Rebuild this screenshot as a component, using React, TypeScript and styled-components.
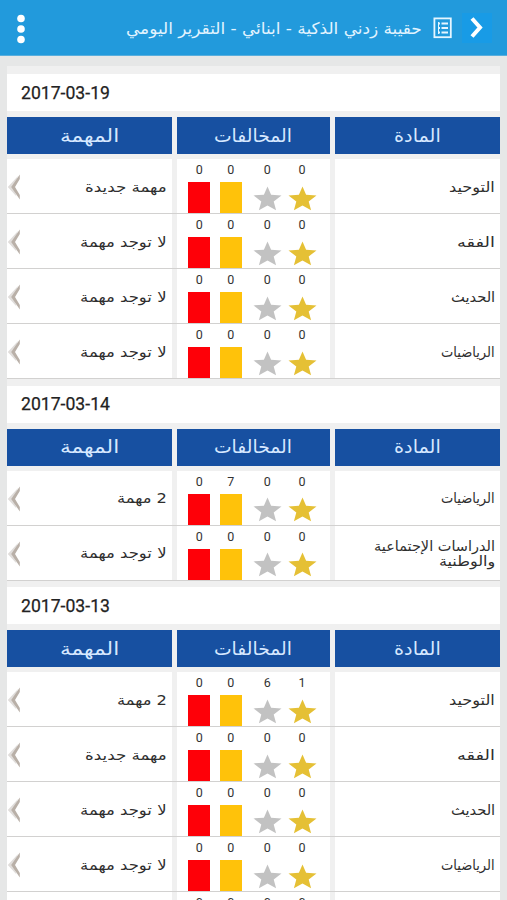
import React, { useLayoutEffect, useRef, useState } from "react";
import styled, { createGlobalStyle } from "styled-components";

const Global = createGlobalStyle`
  * { box-sizing: border-box; }
  html, body { margin: 0; height: 900px; overflow: hidden; }
  body { background: #e6e7e7; font-family: "DejaVu Sans", sans-serif; }
`;

const Screen = styled.div`
  width: 507px;
  height: 900px;
  overflow: hidden;
  display: flex;
  flex-direction: column;
`;

const TopBar = styled.header`
  direction: ltr;
  flex: none;
  height: 56px;
  padding: 0 15px;
  display: flex;
  align-items: center;
  background: #229adc;
  border-bottom: 1px solid #58aedd;
  color: #e2f4ff;
`;

const MenuDots = styled.svg`
  width: 12px;
  height: 32px;
  margin-top: 2px;
  fill: #fff;
`;

const Title = styled.h1`
  margin: 2px 11px 0 auto;
  font-size: 16px;
  line-height: 24px;
  font-weight: 400;
`;

const ListIcon = styled.svg`
  width: 20px;
  height: 22px;
  fill: none;
  stroke: #e6f6ff;
`;

const Back = styled.button`
  width: 30px;
  height: 30px;
  margin: 1px 0 0 9px;
  padding: 0;
  border: 0;
  background: #189be6;
  svg { display: block; fill: none; stroke: #fff; stroke-width: 4; }
`;

const Panel = styled.main`
  direction: rtl;
  flex: none;
  margin: 10px 7px 0;
  padding-top: 8px;
  background: #f0f0f0;
`;

const Day = styled.section`
  display: flex;
  flex-direction: column;
  gap: 6px;
  margin-bottom: 6.5px;
`;

const DateBar = styled.div`
  direction: ltr;
  height: 37px;
  padding-left: 14px;
  display: flex;
  align-items: center;
  background: #fff;
  color: #222;
  font: 400 19px/24px Roboto, sans-serif;
  -webkit-text-stroke: 0.25px #222;
`;

const HeadRow = styled.div`
  display: grid;
  grid-template-columns: 165px 152.5px 164.5px;
  column-gap: 5.5px;
  height: 37px;
`;

const HeadCell = styled.div`
  display: flex;
  align-items: center;
  justify-content: center;
  background: #1750a1;
  color: #d6e8ff;
  font-size: 18px;
  line-height: 26px;
`;

const Rows = styled.div`
  margin-top: -1px;
`;

const Row = styled.div`
  display: grid;
  grid-template-columns: 165px 152.5px 164.5px;
  column-gap: 5.5px;
  height: 55px;
  border-bottom: 1.5px solid #d2d1d0;
`;

const Cell = styled.div`
  background: #fff;
  display: flex;
  align-items: center;
  padding: 2px 5px 0;
  color: #2e2e2e;
  font-size: 14px;
  line-height: 15px;
`;

const Lines = styled.div`
  display: flex;
  flex-direction: column;
`;

const TaskCell = styled(Cell)`
  justify-content: space-between;
  padding-left: 0;
`;

const Marks = styled(Cell)`
  direction: ltr;
  align-items: start;
  padding: 0 8px 0 6.5px;
  display: grid;
  grid-template-columns: 31.5px 31.5px 41.5px 28px;
`;

const Mark = styled.div`
  display: flex;
  flex-direction: column;
  align-items: center;
  font: 400 12.5px/16px Roboto, sans-serif;
  padding-top: 3px;
  color: #333;
`;

const Block = styled.i<{ $color: string }>`
  width: 22px;
  height: 31px;
  margin-top: 4px;
  background: ${(p) => p.$color};
`;

const StarSvg = styled.svg<{ $color: string }>`
  width: 29px;
  height: 25px;
  margin-top: 7.5px;
  fill: ${(p) => p.$color};
`;

const Fit = styled.span<{ $width: number }>`
  display: flex;
  width: ${(p) => p.$width}px;
  white-space: nowrap;
`;

const FitInner = styled.span<{ $ltr?: boolean }>`
  flex: none;
  transform-origin: ${(p) => (p.$ltr ? "left" : "right")} center;
`;

function Label({ text, width, ltr }: { text: string; width: number; ltr?: boolean }) {
  const ref = useRef<HTMLSpanElement>(null);
  const [scale, setScale] = useState(1);
  useLayoutEffect(() => {
    if (ref.current) setScale(width / ref.current.offsetWidth);
  }, [text, width]);
  return (
    <Fit $width={width} dir={ltr ? "ltr" : "rtl"}>
      <FitInner ref={ref} $ltr={ltr} style={{ transform: `scaleX(${scale})` }}>
        {text}
      </FitInner>
    </Fit>
  );
}

type Text = [string, number];
type Entry = { subject: Text[]; marks: number[]; task: Text };

const TAWHEED: Text[] = [["التوحيد", 46]];
const FIQH: Text[] = [["الفقه", 38]];
const HADITH: Text[] = [["الحديث", 44]];
const MATH: Text[] = [["الرياضيات", 54]];
const SOCIAL: Text[] = [["الدراسات الإجتماعية", 121], ["والوطنية", 56]];
const NEW: Text = ["مهمة جديدة", 82];
const NONE: Text = ["لا توجد مهمة", 87];
const TWO: Text = ["2 مهمة", 50];
const ZERO = [0, 0, 0, 0];

const days: { date: string; rows: Entry[] }[] = [
  {
    date: "2017-03-19",
    rows: [
      { subject: TAWHEED, marks: ZERO, task: NEW },
      { subject: FIQH, marks: ZERO, task: NONE },
      { subject: HADITH, marks: ZERO, task: NONE },
      { subject: MATH, marks: ZERO, task: NONE },
    ],
  },
  {
    date: "2017-03-14",
    rows: [
      { subject: MATH, marks: [0, 7, 0, 0], task: TWO },
      { subject: SOCIAL, marks: ZERO, task: NONE },
    ],
  },
  {
    date: "2017-03-13",
    rows: [
      { subject: TAWHEED, marks: [0, 0, 6, 1], task: TWO },
      { subject: FIQH, marks: ZERO, task: NEW },
      { subject: HADITH, marks: ZERO, task: NONE },
      { subject: MATH, marks: ZERO, task: NONE },
      { subject: FIQH, marks: ZERO, task: NONE },
    ],
  },
];

const Star = ({ color }: { color: string }) => (
  <StarSvg $color={color} viewBox="0 0 29 25">
    <path d="M14.5 0.5 18.1 8.7 28.5 9.4 20.7 15.4 23.1 24.2 14.5 19.6 5.9 24.2 8.3 15.4 0.5 9.4 10.9 8.7Z" />
  </StarSvg>
);

const Chevron = () => (
  <svg width="14" height="28" viewBox="0 0 14 28">
    <path d="M11 3 0.8 14 9.5 23.5 7 14Z" fill="#e0dddb" />
    <path d="M12.8 1.5V6L8 14 12.8 22V26.5L4.2 14Z" fill="#b9b0a8" />
  </svg>
);

export default function App() {
  return (
    <Screen>
      <Global />
      <TopBar>
        <MenuDots viewBox="0 0 12 32">
          <circle cx="6" cy="5.5" r="3.8" />
          <circle cx="6" cy="16" r="3.8" />
          <circle cx="6" cy="26.5" r="3.8" />
        </MenuDots>
        <Title>
          <Label text="حقيبة زدني الذكية - ابنائي - التقرير اليومي" width={296} />
        </Title>
        <ListIcon viewBox="0 0 20 22">
          <rect x="1.4" y="1.4" width="16.4" height="18.8" strokeWidth="1.8" />
          <path d="M5 6.5H7M8.5 6.5H15M5 11H7M8.5 11H15M5 15.5H7M8.5 15.5H15" strokeWidth="1.8" />
          <path d="M5.5 5V17" strokeWidth="1" />
        </ListIcon>
        <Back aria-label="رجوع">
          <svg width="30" height="30" viewBox="0 0 30 30">
            <path d="M10 5.5 18 14.5 10 23.5" />
          </svg>
        </Back>
      </TopBar>
      <Panel>
        {days.map((day) => (
          <Day key={day.date}>
            <DateBar>
              <Label text={day.date} width={89} ltr />
            </DateBar>
            <HeadRow>
              <HeadCell><Label text="المادة" width={47} /></HeadCell>
              <HeadCell><Label text="المخالفات" width={78} /></HeadCell>
              <HeadCell><Label text="المهمة" width={59} /></HeadCell>
            </HeadRow>
            <Rows>
              {day.rows.map((row, i) => (
                <Row key={i}>
                  <Cell>
                    <Lines>
                      {row.subject.map(([t, w]) => <Label key={t} text={t} width={w} />)}
                    </Lines>
                  </Cell>
                  <Marks>
                    <Mark>{row.marks[0]}<Block $color="#fe0008" /></Mark>
                    <Mark>{row.marks[1]}<Block $color="#ffc20a" /></Mark>
                    <Mark>{row.marks[2]}<Star color="#c2c2c2" /></Mark>
                    <Mark>{row.marks[3]}<Star color="#e5c035" /></Mark>
                  </Marks>
                  <TaskCell>
                    <Label text={row.task[0]} width={row.task[1]} />
                    <Chevron />
                  </TaskCell>
                </Row>
              ))}
            </Rows>
          </Day>
        ))}
      </Panel>
    </Screen>
  );
}
